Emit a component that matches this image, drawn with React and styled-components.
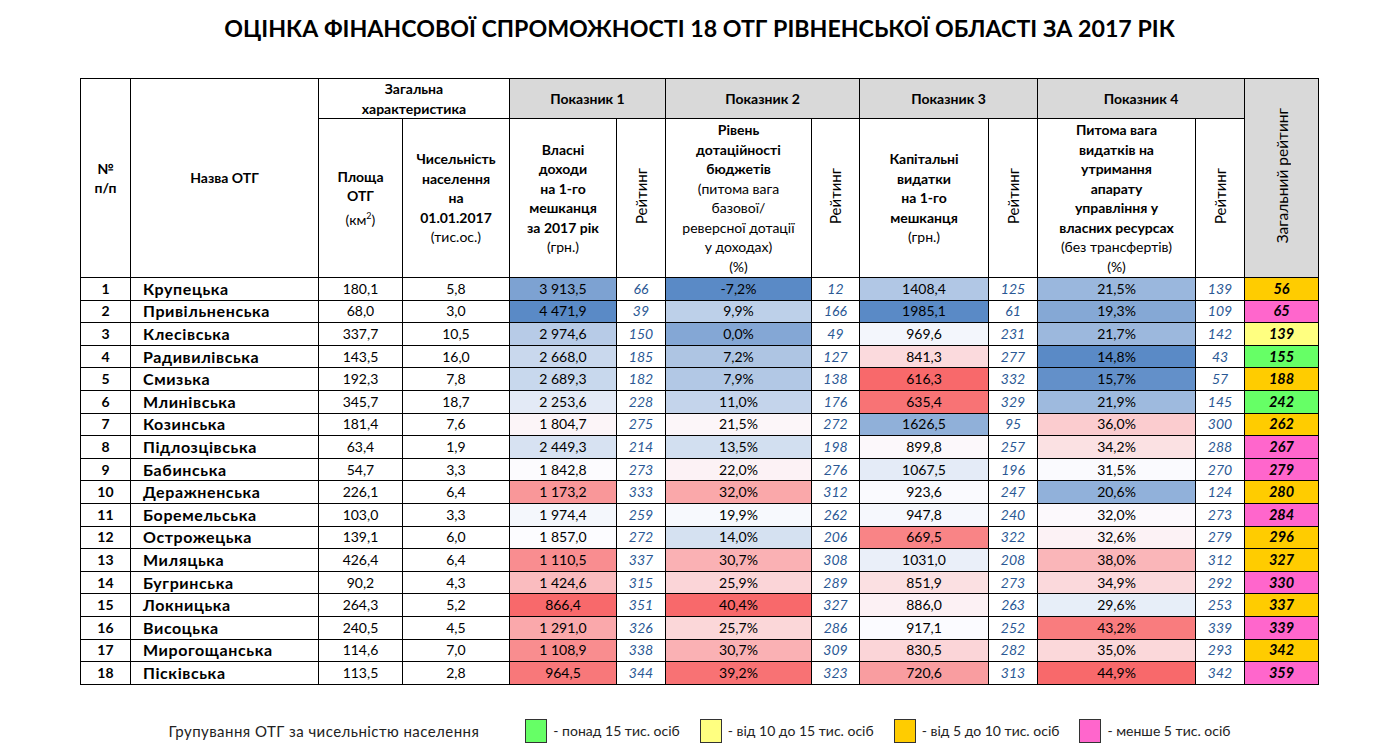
import React from "react";
import styled, { createGlobalStyle } from "styled-components";

const GlobalStyle = createGlobalStyle`
  html, body { margin: 0; padding: 0; background: #fff; }
  body { font-family: Lato, "Noto Sans", sans-serif; color: #000; }
`;

const Page = styled.div`
  box-sizing: border-box;
  width: 1396px;
  display: flex;
  flex-direction: column;
  align-items: center;
  padding: 16px 0 0 3px;
`;

const Title = styled.h1`
  margin: 0;
  font-size: 23.2px;
  line-height: 24px;
  font-weight: 700;
`;

const Table = styled.table`
  margin-top: 38px;
  border-collapse: collapse;
  table-layout: fixed;
  width: 1238px;
`;

const HeadRow = styled.tr`
  height: ${(p) => p.$h}px;
`;

const HeadCell = styled.th`
  border: 1px solid #000;
  padding: 0 1px;
  background: ${(p) => (p.$gray ? "#d9d9d9" : "#fff")};
  font-size: 14px;
  line-height: 19.5px;
  font-weight: 700;
  text-align: center;
  vertical-align: middle;
  white-space: nowrap;
`;

const Normal = styled.span`
  font-weight: 400;
`;

const Sup = styled.sup`
  font-size: 9px;
`;

const Rotated = styled.span`
  display: inline-block;
  writing-mode: vertical-rl;
  transform: rotate(180deg);
  font-weight: 400;
  font-size: ${(p) => (p.$big ? 15.5 : 15)}px;
  line-height: 18px;
`;

const Row = styled.tr`
  height: 22.6px;
`;

const Cell = styled.td`
  border: 1px solid #000;
  padding: 0 ${(p) => (p.$left ? "12px" : "2px")};
  text-align: ${(p) => (p.$left ? "left" : "center")};
  font-size: ${(p) => (p.$name ? "16px" : p.$total ? "14.5px" : "14px")};
  letter-spacing: ${(p) => (p.$name ? "0.6px" : "0")};
  font-weight: ${(p) => (p.$bold ? 700 : 400)};
  font-style: ${(p) => (p.$italic ? "italic" : "normal")};
  color: ${(p) => (p.$rating ? "#2a5894" : "#000")};
  background: ${(p) => p.$bg || "#fff"};
  line-height: 20px;
  white-space: nowrap;
  vertical-align: middle;
`;

const Legend = styled.div`
  margin-top: 34px;
  display: flex;
  align-items: center;
  font-size: 14px;
  color: #222;
`;

const LegendLabel = styled.span`
  font-size: 15px;
  letter-spacing: 0.45px;
  margin-right: 46px;
`;

const LegendItem = styled.div`
  display: flex;
  align-items: center;
  gap: 6px;
  margin-right: ${(p) => (p.$last ? 0 : 20)}px;
`;

const Swatch = styled.span`
  width: 20px;
  height: 22px;
  border: 1px solid #333;
  background: ${(p) => p.$color};
`;

const GROUPS = {
  green: "#66ff66",
  yellow: "#ffff80",
  orange: "#ffcc00",
  pink: "#ff66cc",
};

const NB = "\u00a0";

const rows = [
  [1, "Крупецька", "180,1", "5,8", `3${NB}913,5`, 66, "-7,2%", 12, "1408,4", 125, "21,5%", 139, 56],
  [2, "Привільненська", "68,0", "3,0", `4${NB}471,9`, 39, "9,9%", 166, "1985,1", 61, "19,3%", 109, 65],
  [3, "Клесівська", "337,7", "10,5", `2${NB}974,6`, 150, "0,0%", 49, "969,6", 231, "21,7%", 142, 139],
  [4, "Радивилівська", "143,5", "16,0", `2${NB}668,0`, 185, "7,2%", 127, "841,3", 277, "14,8%", 43, 155],
  [5, "Смизька", "192,3", "7,8", `2${NB}689,3`, 182, "7,9%", 138, "616,3", 332, "15,7%", 57, 188],
  [6, "Млинівська", "345,7", "18,7", `2${NB}253,6`, 228, "11,0%", 176, "635,4", 329, "21,9%", 145, 242],
  [7, "Козинська", "181,4", "7,6", `1${NB}804,7`, 275, "21,5%", 272, "1626,5", 95, "36,0%", 300, 262],
  [8, "Підлозцівська", "63,4", "1,9", `2${NB}449,3`, 214, "13,5%", 198, "899,8", 257, "34,2%", 288, 267],
  [9, "Бабинська", "54,7", "3,3", `1${NB}842,8`, 273, "22,0%", 276, "1067,5", 196, "31,5%", 270, 279],
  [10, "Деражненська", "226,1", "6,4", `1${NB}173,2`, 333, "32,0%", 312, "923,6", 247, "20,6%", 124, 280],
  [11, "Боремельська", "103,0", "3,3", `1${NB}974,4`, 259, "19,9%", 262, "947,8", 240, "32,0%", 273, 284],
  [12, "Острожецька", "139,1", "6,0", `1${NB}857,0`, 272, "14,0%", 206, "669,5", 322, "32,6%", 279, 296],
  [13, "Миляцька", "426,4", "6,4", `1${NB}110,5`, 337, "30,7%", 308, "1031,0", 208, "38,0%", 312, 327],
  [14, "Бугринська", "90,2", "4,3", `1${NB}424,6`, 315, "25,9%", 289, "851,9", 273, "34,9%", 292, 330],
  [15, "Локницька", "264,3", "5,2", "866,4", 351, "40,4%", 327, "886,0", 263, "29,6%", 253, 337],
  [16, "Висоцька", "240,5", "4,5", `1${NB}291,0`, 326, "25,7%", 286, "917,1", 252, "43,2%", 339, 339],
  [17, "Мирогощанська", "114,6", "7,0", `1${NB}108,9`, 338, "30,7%", 309, "830,5", 282, "35,0%", 293, 342],
  [18, "Пісківська", "113,5", "2,8", "964,5", 344, "39,2%", 323, "720,6", 313, "44,9%", 342, 359],
];

const num = (s) => parseFloat(String(s).replace(/[\s\u00a0%]/g, "").replace(",", "."));

const BLUE = [90, 138, 198];
const WHITE = [252, 252, 255];
const RED = [248, 105, 107];
const mix = (a, b, t) => a.map((v, i) => Math.round(v + (b[i] - v) * t));

function makeScale(colIdx, highGood) {
  const vals = rows.map((r) => num(r[colIdx]));
  const sorted = [...vals].sort((a, b) => a - b);
  const n = sorted.length;
  const mid = n % 2 ? sorted[(n - 1) / 2] : (sorted[n / 2 - 1] + sorted[n / 2]) / 2;
  const min = sorted[0];
  const max = sorted[n - 1];
  const lo = highGood ? RED : BLUE;
  const hi = highGood ? BLUE : RED;
  return (v) => {
    const c = v <= mid ? mix(lo, WHITE, (v - min) / (mid - min || 1)) : mix(WHITE, hi, (v - mid) / (max - mid || 1));
    return `rgb(${c[0]},${c[1]},${c[2]})`;
  };
}

const scales = {
  4: makeScale(4, true),
  6: makeScale(6, false),
  8: makeScale(8, true),
  10: makeScale(10, false),
};

function groupColor(pop) {
  const p = num(pop);
  if (p > 15) return GROUPS.green;
  if (p >= 10) return GROUPS.yellow;
  if (p >= 5) return GROUPS.orange;
  return GROUPS.pink;
}

const widths = [50, 188, 84, 107, 107, 49, 146, 48, 129, 49, 158, 49, 74];

export default function App() {
  return (
    <Page>
      <GlobalStyle />
      <Title>ОЦІНКА ФІНАНСОВОЇ СПРОМОЖНОСТІ 18 ОТГ РІВНЕНСЬКОЇ ОБЛАСТІ ЗА 2017 РІК</Title>
      <Table>
        <colgroup>
          {widths.map((w, i) => (
            <col key={i} style={{ width: w }} />
          ))}
        </colgroup>
        <thead>
          <HeadRow $h={40}>
            <HeadCell rowSpan={2}>
              №<br />п/п
            </HeadCell>
            <HeadCell rowSpan={2}>Назва ОТГ</HeadCell>
            <HeadCell colSpan={2}>
              Загальна
              <br />
              характеристика
            </HeadCell>
            <HeadCell colSpan={2} $gray>Показник 1</HeadCell>
            <HeadCell colSpan={2} $gray>Показник 2</HeadCell>
            <HeadCell colSpan={2} $gray>Показник 3</HeadCell>
            <HeadCell colSpan={2} $gray>Показник 4</HeadCell>
            <HeadCell rowSpan={2} $gray>
              <Rotated $big>Загальний рейтинг</Rotated>
            </HeadCell>
          </HeadRow>
          <HeadRow $h={159}>
            <HeadCell>
              Площа
              <br />
              ОТГ
              <br />
              <Normal>
                (км<Sup>2</Sup>)
              </Normal>
            </HeadCell>
            <HeadCell>
              Чисельність
              <br />
              населення
              <br />
              на
              <br />
              01.01.2017
              <br />
              <Normal>(тис.ос.)</Normal>
            </HeadCell>
            <HeadCell>
              Власні
              <br />
              доходи
              <br />
              на 1-го
              <br />
              мешканця
              <br />
              за 2017 рік
              <br />
              <Normal>(грн.)</Normal>
            </HeadCell>
            <HeadCell>
              <Rotated>Рейтинг</Rotated>
            </HeadCell>
            <HeadCell>
              Рівень
              <br />
              дотаційності
              <br />
              бюджетів
              <br />
              <Normal>
                (питома вага
                <br />
                базової/
                <br />
                реверсної дотації
                <br />у доходах)
                <br />
                (%)
              </Normal>
            </HeadCell>
            <HeadCell>
              <Rotated>Рейтинг</Rotated>
            </HeadCell>
            <HeadCell>
              Капітальні
              <br />
              видатки
              <br />
              на 1-го
              <br />
              мешканця
              <br />
              <Normal>(грн.)</Normal>
            </HeadCell>
            <HeadCell>
              <Rotated>Рейтинг</Rotated>
            </HeadCell>
            <HeadCell>
              Питома вага
              <br />
              видатків на
              <br />
              утримання
              <br />
              апарату
              <br />
              управління у
              <br />
              власних ресурсах
              <br />
              <Normal>
                (без трансфертів)
                <br />
                (%)
              </Normal>
            </HeadCell>
            <HeadCell>
              <Rotated>Рейтинг</Rotated>
            </HeadCell>
          </HeadRow>
        </thead>
        <tbody>
          {rows.map((r) => (
            <Row key={r[0]}>
              <Cell $bold>{r[0]}</Cell>
              <Cell $bold $left $name>
                {r[1]}
              </Cell>
              <Cell>{r[2]}</Cell>
              <Cell>{r[3]}</Cell>
              <Cell $bg={scales[4](num(r[4]))}>{r[4]}</Cell>
              <Cell $italic $rating>{r[5]}</Cell>
              <Cell $bg={scales[6](num(r[6]))}>{r[6]}</Cell>
              <Cell $italic $rating>{r[7]}</Cell>
              <Cell $bg={scales[8](num(r[8]))}>{r[8]}</Cell>
              <Cell $italic $rating>{r[9]}</Cell>
              <Cell $bg={scales[10](num(r[10]))}>{r[10]}</Cell>
              <Cell $italic $rating>{r[11]}</Cell>
              <Cell $bold $italic $total $bg={groupColor(r[3])}>
                {r[12]}
              </Cell>
            </Row>
          ))}
        </tbody>
      </Table>
      <Legend>
        <LegendLabel>Групування ОТГ за чисельністю населення</LegendLabel>
        <LegendItem>
          <Swatch $color={GROUPS.green} />- понад 15 тис. осіб
        </LegendItem>
        <LegendItem>
          <Swatch $color={GROUPS.yellow} />- від 10 до 15 тис. осіб
        </LegendItem>
        <LegendItem>
          <Swatch $color={GROUPS.orange} />- від 5 до 10 тис. осіб
        </LegendItem>
        <LegendItem $last>
          <Swatch $color={GROUPS.pink} />- менше 5 тис. осіб
        </LegendItem>
      </Legend>
    </Page>
  );
}
